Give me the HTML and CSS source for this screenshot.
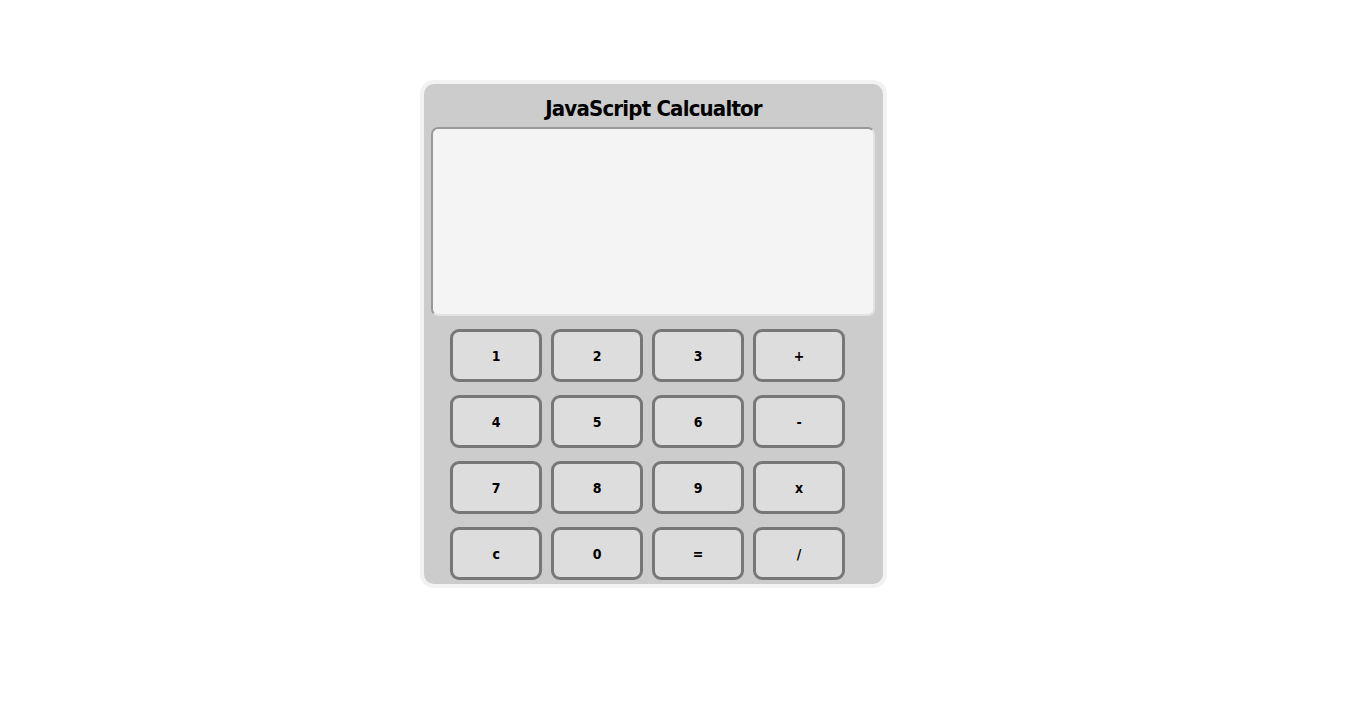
FILE: index.html
```html
<!DOCTYPE html>
<html>
<head>
<meta charset="utf-8">
<link rel="stylesheet" href="styles.css">
</head>
<body>
<div class="page">
  <div class="calc">
    <h1 class="title">JavaScript Calcualtor</h1>
    <div class="display"></div>
    <div class="keys">
      <button class="key">1</button>
      <button class="key">2</button>
      <button class="key">3</button>
      <button class="key">+</button>
      <button class="key">4</button>
      <button class="key">5</button>
      <button class="key">6</button>
      <button class="key">-</button>
      <button class="key">7</button>
      <button class="key">8</button>
      <button class="key">9</button>
      <button class="key">x</button>
      <button class="key">c</button>
      <button class="key">0</button>
      <button class="key">=</button>
      <button class="key">/</button>
    </div>
  </div>
</div>
</body>
</html>
```
FILE: styles.css
```css
html, body {
  margin: 0;
  padding: 0;
  background: #fff;
}
.page {
  padding-top: 80px;
  padding-left: 420px;
}
.calc {
  width: 459px;
  box-sizing: content-box;
  background: #cccccc;
  border: 4px solid #f2f2f2;
  border-radius: 14px;
  padding: 0 0 4px 0;
}
.title {
  margin: 0;
  height: 43px;
  line-height: 50px;
  text-align: center;
  font-family: "DejaVu Sans Condensed", "DejaVu Sans", sans-serif;
  font-weight: bold;
  font-size: 22px;
  letter-spacing: -0.8px;
  color: #000;
}
.display {
  margin-left: 7px;
  width: 444px;
  height: 189px;
  box-sizing: border-box;
  background: #f4f4f4;
  border-top: 2px solid #999;
  border-left: 2px solid #999;
  border-right: 2px solid #e2e2e2;
  border-bottom: 2px solid #e2e2e2;
  border-radius: 7px;
}
.keys {
  display: grid;
  grid-template-columns: repeat(4, 92px);
  column-gap: 9px;
  row-gap: 13px;
  padding: 13px 0 0 26px;
}
.key {
  height: 53px;
  box-sizing: border-box;
  background: #dddddd;
  border: 3px solid #777;
  border-radius: 9px;
  font-family: "DejaVu Sans Condensed", "DejaVu Sans", sans-serif;
  font-weight: bold;
  font-size: 14px;
  letter-spacing: -0.3px;
  color: #000;
  padding: 1px 0 0 0;
}
```
